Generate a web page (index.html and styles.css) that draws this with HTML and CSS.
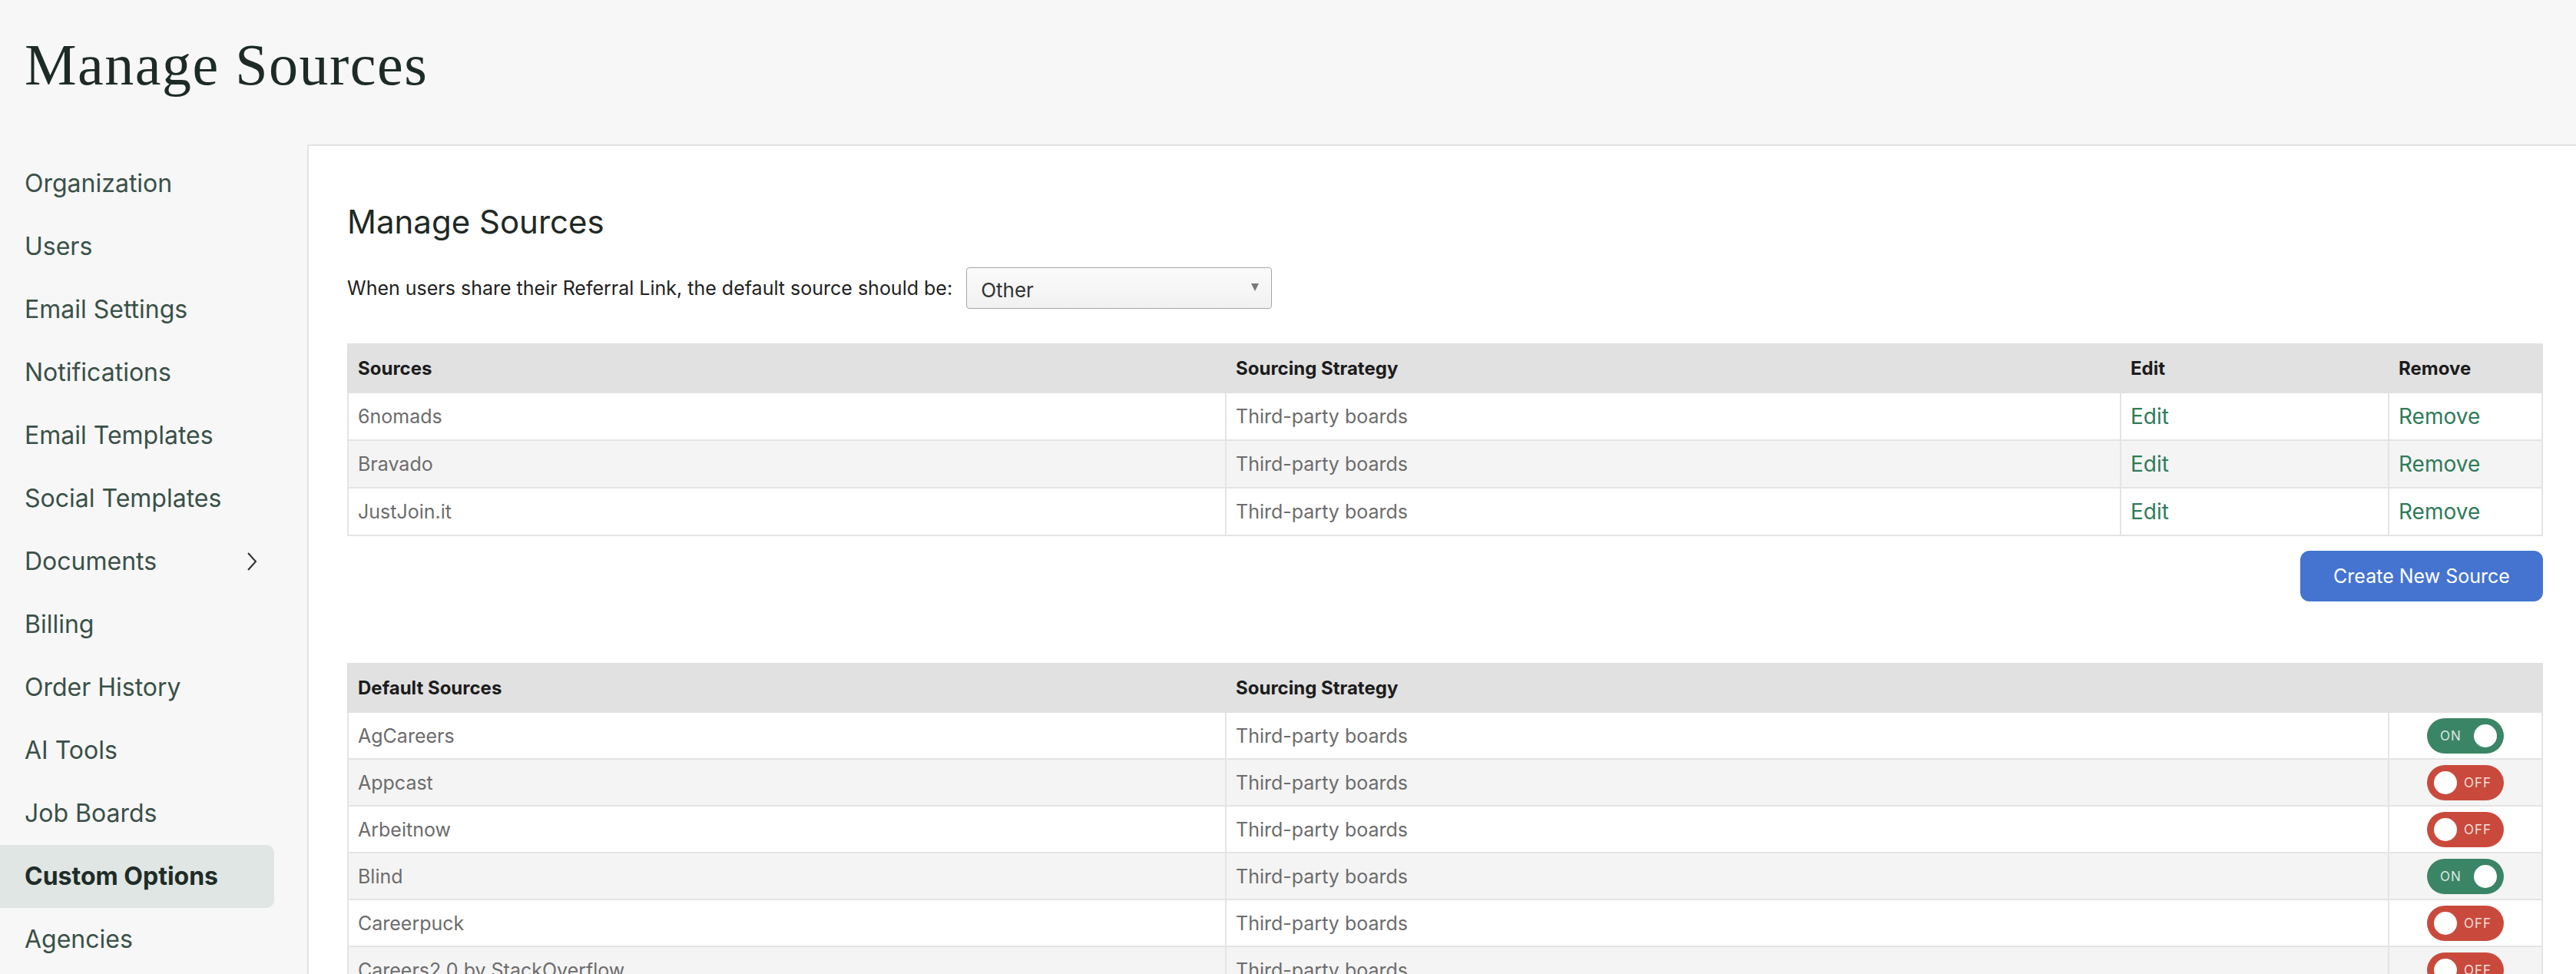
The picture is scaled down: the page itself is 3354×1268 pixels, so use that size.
FILE: index.html
```html
<!DOCTYPE html>
<html lang="en">
<head>
<meta charset="utf-8">
<title>Manage Sources</title>
<link rel="stylesheet" href="styles.css">
</head>
<body>
<header class="page-header">
  <h1 class="page-title">Manage Sources</h1>
</header>
<div class="layout">
  <nav class="sidenav">
    <a class="nav-item">Organization</a>
    <a class="nav-item">Users</a>
    <a class="nav-item">Email Settings</a>
    <a class="nav-item">Notifications</a>
    <a class="nav-item">Email Templates</a>
    <a class="nav-item">Social Templates</a>
    <a class="nav-item has-sub">Documents
      <svg class="chevron" width="14" height="26" viewBox="0 0 14 26"><polyline points="2,2 12,13 2,24" fill="none" stroke="#2b2f2d" stroke-width="2"/></svg>
    </a>
    <a class="nav-item">Billing</a>
    <a class="nav-item">Order History</a>
    <a class="nav-item">AI Tools</a>
    <a class="nav-item">Job Boards</a>
    <a class="nav-item active">Custom Options</a>
    <a class="nav-item">Agencies</a>
  </nav>
  <main class="card">
    <h2 class="card-title">Manage Sources</h2>
    <div class="referral-row">
      <span class="referral-label">When users share their Referral Link, the default source should be:</span>
      <div class="select"><span>Other</span><span class="caret"></span></div>
    </div>

    <table class="grid sources">
      <colgroup>
        <col class="c-name"><col class="c-strategy"><col class="c-edit"><col class="c-remove">
      </colgroup>
      <thead>
        <tr><th>Sources</th><th>Sourcing Strategy</th><th>Edit</th><th>Remove</th></tr>
      </thead>
      <tbody>
        <tr><td>6nomads</td><td>Third-party boards</td><td><a class="link">Edit</a></td><td><a class="link">Remove</a></td></tr>
        <tr><td>Bravado</td><td>Third-party boards</td><td><a class="link">Edit</a></td><td><a class="link">Remove</a></td></tr>
        <tr><td>JustJoin.it</td><td>Third-party boards</td><td><a class="link">Edit</a></td><td><a class="link">Remove</a></td></tr>
      </tbody>
    </table>

    <div class="actions">
      <button class="btn-primary">Create New Source</button>
    </div>

    <table class="grid defaults">
      <colgroup>
        <col class="c-name"><col class="c-strategy-wide"><col class="c-remove">
      </colgroup>
      <thead>
        <tr><th>Default Sources</th><th>Sourcing Strategy</th><th></th></tr>
      </thead>
      <tbody>
        <tr><td>AgCareers</td><td>Third-party boards</td><td class="toggle-cell"><span class="toggle on"><span class="toggle-text">ON</span><span class="knob"></span></span></td></tr>
        <tr><td>Appcast</td><td>Third-party boards</td><td class="toggle-cell"><span class="toggle off"><span class="knob"></span><span class="toggle-text">OFF</span></span></td></tr>
        <tr><td>Arbeitnow</td><td>Third-party boards</td><td class="toggle-cell"><span class="toggle off"><span class="knob"></span><span class="toggle-text">OFF</span></span></td></tr>
        <tr><td>Blind</td><td>Third-party boards</td><td class="toggle-cell"><span class="toggle on"><span class="toggle-text">ON</span><span class="knob"></span></span></td></tr>
        <tr><td>Careerpuck</td><td>Third-party boards</td><td class="toggle-cell"><span class="toggle off"><span class="knob"></span><span class="toggle-text">OFF</span></span></td></tr>
        <tr><td>Careers2.0 by StackOverflow</td><td>Third-party boards</td><td class="toggle-cell"><span class="toggle off"><span class="knob"></span><span class="toggle-text">OFF</span></span></td></tr>
      </tbody>
    </table>
  </main>
</div>
</body>
</html>
```

FILE: styles.css
```css
* { box-sizing: border-box; }

html, body {
  margin: 0;
  padding: 0;
  background: #f7f7f7;
  font-family: Inter, "Liberation Sans", Arial, sans-serif;
}

.page-header {
  height: 188px;
  padding: 46px 0 0 32px;
}

.page-title {
  margin: 0;
  font-family: "Liberation Serif", "Times New Roman", serif;
  font-weight: 400;
  font-size: 76px;
  line-height: 76px;
  letter-spacing: 1.5px;
  color: #1d2b26;
}

.layout {
  display: flex;
  align-items: flex-start;
}

.sidenav {
  width: 400px;
  flex: 0 0 400px;
  padding-top: 10px;
  display: flex;
  flex-direction: column;
}

.nav-item {
  display: flex;
  align-items: center;
  justify-content: space-between;
  height: 82px;
  line-height: 82px;
  margin-right: 43px;
  padding: 0 22px 0 32px;
  font-size: 32px;
  color: #3a5048;
  text-decoration: none;
}

.nav-item.active {
  background: #dfe6e3;
  border-radius: 0 10px 10px 0;
  font-weight: 700;
  color: #1f2c27;
}

.chevron {
  display: block;
}

.card {
  flex: 1;
  min-height: 1100px;
  background: #ffffff;
  border-top: 2px solid #e3e3e3;
  border-left: 2px solid #e3e3e3;
  padding: 75px 45px 40px 50px;
}

.card-title {
  margin: 0;
  font-size: 42px;
  line-height: 48px;
  font-weight: 400;
  color: #1f2925;
}

.referral-row {
  margin-top: 35px;
  height: 54px;
  display: flex;
  align-items: center;
  gap: 18px;
}

.referral-label {
  font-size: 25px;
  color: #222;
}

.select {
  width: 398px;
  height: 54px;
  border: 1px solid #a6a6a6;
  border-radius: 4px;
  background: linear-gradient(#fbfbfb, #f1f1f1);
  display: flex;
  align-items: center;
  justify-content: space-between;
  padding: 4px 16px 0 18px;
  font-size: 26px;
  color: #333;
}

.caret {
  width: 0;
  height: 0;
  border-left: 5px solid transparent;
  border-right: 5px solid transparent;
  border-top: 10px solid #7a7a7a;
  margin-top: -6px;
}

.grid {
  width: 100%;
  border-collapse: collapse;
  table-layout: fixed;
}

.sources { margin-top: 45px; }
.defaults { margin-top: 80px; }

.c-name { width: 1143px; }
.c-strategy { width: 1165px; }
.c-edit { width: 349px; }
.c-remove { width: 200px; }
.c-strategy-wide { width: 1514px; }

.grid th {
  height: 63px;
  background: #e1e1e1;
  text-align: left;
  padding: 0 12px;
  font-size: 24px;
  font-weight: 700;
  color: #1c1c1c;
  border: 2px solid #e1e1e1;
}

.grid tbody tr { height: 62px; }
.defaults tbody tr { height: 61px; }

.grid tbody tr:nth-child(even) td { background: #f4f4f4; }

.grid td {
  border: 2px solid #e4e4e4;
  padding: 0 12px;
  font-size: 25px;
  color: #6c6c6c;
  white-space: nowrap;
}

.link {
  font-size: 28px;
  color: #2f7b59;
  text-decoration: none;
}

.actions {
  display: flex;
  justify-content: flex-end;
  margin-top: 19px;
}

.btn-primary {
  width: 316px;
  height: 66px;
  border: 0;
  border-radius: 12px;
  background: #4574d0;
  color: #ffffff;
  font-family: Inter, "Liberation Sans", Arial, sans-serif;
  font-size: 25px;
  padding: 0;
}

.grid td.toggle-cell {
  text-align: center;
  padding: 0;
}

.toggle {
  display: inline-flex;
  align-items: center;
  vertical-align: middle;
  width: 100px;
  height: 46px;
  border-radius: 23px;
  font-size: 17px;
  letter-spacing: 1px;
  color: rgba(255, 255, 255, 0.82);
}

.toggle.on {
  background: #3a8566;
  justify-content: space-between;
  padding: 0 9px 0 17px;
}

.toggle.off {
  background: #c94a3c;
  gap: 9px;
  padding: 0 0 0 9px;
}

.knob {
  width: 30px;
  height: 30px;
  border-radius: 50%;
  background: #ffffff;
}

.toggle-text { line-height: 1; padding-top: 1px; }
```
